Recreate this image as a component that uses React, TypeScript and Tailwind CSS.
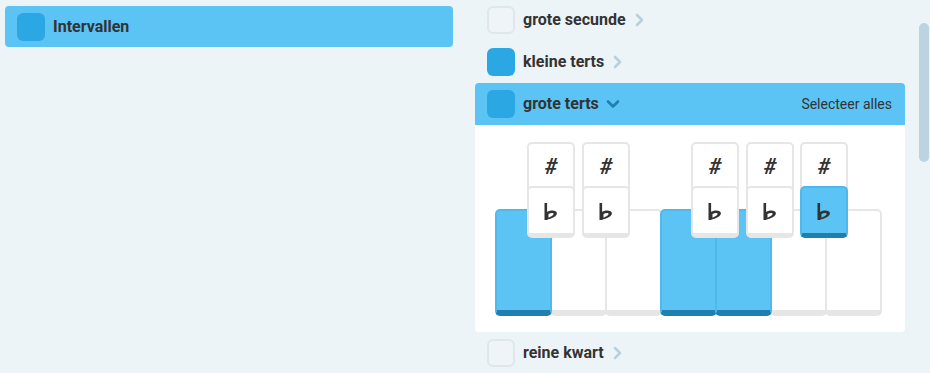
import React from "react";

const font = { fontFamily: "Roboto, 'Liberation Sans', sans-serif" };

function ChevronRight() {
  return (
    <svg width="9" height="14" viewBox="0 0 9 14" className="ml-[9px]">
      <polyline points="2,2 7,7 2,12" fill="none" stroke="#b8d0de" strokeWidth="2.6" strokeLinecap="round" strokeLinejoin="round" />
    </svg>
  );
}

function ChevronDown() {
  return (
    <svg width="14" height="10" viewBox="0 0 14 10" className="ml-[7px]">
      <polyline points="2,2.5 7,7.5 12,2.5" fill="none" stroke="#1f7fae" strokeWidth="2.6" strokeLinecap="round" strokeLinejoin="round" />
    </svg>
  );
}

function FlatIcon({ hole }: { hole: string }) {
  return (
    <svg width="14" height="17" viewBox="0 0 14 17" className="mt-[1px]">
      <rect x="0.5" y="0" width="2.6" height="17" fill="#333" />
      <path d="M2.5 9.2 C6 6.6, 13.2 6.8, 12.9 10.6 C12.7 13.6, 8 15.6, 2.5 17 Z" fill="#333" />
      <path d="M4.5 11.1 C6.8 9.5, 9.8 9.5, 9.6 11 C9.4 12.4, 7 13.6, 4.5 14.7 Z" fill={hole} />
    </svg>
  );
}

function Row({ label, checked, open }: { label: string; checked: boolean; open?: boolean }) {
  return (
    <div className={`flex h-[42px] items-center pl-3 pr-[13px] ${open ? "bg-[#5bc4f5] rounded-t-[4px]" : ""}`}>
      <div
        className={
          checked
            ? "h-[28px] w-[28px] rounded-[6px] bg-[#2ba8e4]"
            : "h-[28px] w-[28px] rounded-[6px] border-2 border-[#e0e7ec] bg-[#eef4f8]"
        }
      />
      <span className="ml-2 text-[16px] font-bold text-[#333]">{label}</span>
      {open ? <ChevronDown /> : <ChevronRight />}
      {open && <span className="ml-auto text-[14px] text-[#333]">Selecteer alles</span>}
    </div>
  );
}

function AccBtn({ glyph, selected, top }: { glyph: "#" | "b"; selected?: boolean; top: number }) {
  const cls = selected
    ? "border-[#4db8ec] border-b-[#1f7fae] bg-[#5bc4f5]"
    : "border-[#e6e6e6] bg-white";
  return (
    <div
      className={`absolute left-0 flex h-[52px] w-[48px] items-center justify-center rounded-[5px] border-2 border-b-[5px] ${cls}`}
      style={{ top }}
    >
      {glyph === "#" ? (
        <span className="text-[22px] font-bold italic leading-none text-[#333]" style={font}>#</span>
      ) : (
        <FlatIcon hole={selected ? "#5bc4f5" : "#ffffff"} />
      )}
    </div>
  );
}

function BlackKey({ left, flatSelected }: { left: number; flatSelected?: boolean }) {
  return (
    <div className="absolute top-0 z-20 h-[96px] w-[48px]" style={{ left }}>
      <AccBtn glyph="#" top={0} />
      <AccBtn glyph="b" top={44} selected={flatSelected} />
    </div>
  );
}

function WhiteKey({ selected, first }: { selected?: boolean; first?: boolean }) {
  const cls = selected
    ? "z-10 bg-[#5bc4f5] border-[#4fb9ec] border-b-[#1f7fae]"
    : "bg-white border-[#e6e6e6]";
  return (
    <div
      className={`relative h-[107px] w-[57px] shrink-0 rounded-[5px] border-2 border-b-[6px] ${cls} ${first ? "" : "-ml-[2px]"}`}
    />
  );
}

export default function App() {
  const whites = [true, false, false, true, true, false, false];
  return (
    <div className="flex h-[373px] w-[930px] overflow-hidden bg-[#edf4f8]" style={font}>
      <div className="w-[465px] shrink-0 pl-[5px] pt-[6px]">
        <div className="flex h-[41px] w-[448px] items-center rounded-[4px] bg-[#5bc4f5] pl-3">
          <div className="h-[28px] w-[28px] rounded-[6px] bg-[#2ba8e4]" />
          <span className="ml-2 text-[16px] font-bold text-[#333]">Intervallen</span>
        </div>
      </div>
      <div className="relative flex-1">
        <div className="-mt-px ml-[10px] w-[430px]">
          <Row label="grote secunde" checked={false} />
          <Row label="kleine terts" checked={true} />
          <Row label="grote terts" checked={true} open />
          <div className="h-[207px] rounded-b-[4px] bg-white pl-5 pt-[17px]">
            <div className="relative h-[174px] w-[385px]">
              <BlackKey left={32} />
              <BlackKey left={87} />
              <BlackKey left={196} />
              <BlackKey left={251} />
              <BlackKey left={305} flatSelected />
              <div className="absolute bottom-0 left-0 flex">
                {whites.map((s, i) => (
                  <WhiteKey key={i} selected={s} first={i === 0} />
                ))}
              </div>
            </div>
          </div>
          <Row label="reine kwart" checked={false} />
        </div>
        <div className="absolute left-[454px] top-[23px] h-[139px] w-[10px] rounded-full bg-[#bcd4e2]" />
      </div>
    </div>
  );
}
